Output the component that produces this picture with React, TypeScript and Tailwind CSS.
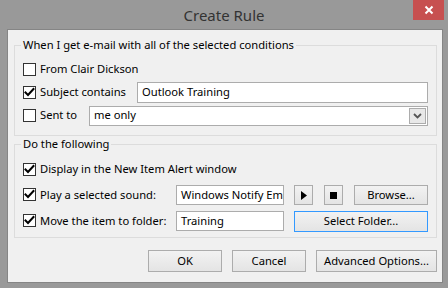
import React from "react";

function Check({ checked }: { checked: boolean }) {
  return (
    <div className="w-[13px] h-[13px] border border-[#333333] bg-white flex items-center justify-center shrink-0">
      {checked && (
        <svg width="11" height="11" viewBox="0 0 11 11">
          <path d="M1.5 5.5 L4 8 L9.5 2" fill="none" stroke="#000" strokeWidth="2" strokeLinecap="square" />
        </svg>
      )}
    </div>
  );
}

function Btn({ className, children }: { className: string; children?: React.ReactNode }) {
  return (
    <div
      className={
        "border bg-gradient-to-b from-[#f2f2f2] to-[#e4e4e4] flex items-center justify-center text-[11.2px] text-black " +
        className
      }
    >
      {children}
    </div>
  );
}

function Field({ className, children }: { className: string; children?: React.ReactNode }) {
  return (
    <div className={"border border-[#acacac] bg-white flex items-center pl-[4px] text-[11.2px] text-black overflow-hidden whitespace-nowrap " + className}>
      {children}
    </div>
  );
}

export default function App() {
  return (
    <div className="w-[448px] h-[288px] bg-[#999999] flex flex-col font-['Noto_Sans',sans-serif] overflow-hidden">
      <div className="h-[29px] relative flex items-center justify-center text-[15px] text-[#333333] pt-[1px]">
        Create Rule
        <div className="absolute right-[4px] top-0 w-[31px] h-[20px] bg-[#c75050] flex items-center justify-center">
          <svg width="10" height="10" viewBox="0 0 10 10">
            <path d="M1.5 1.5 L8.5 8.5 M8.5 1.5 L1.5 8.5" stroke="#fff" strokeWidth="2" />
          </svg>
        </div>
      </div>
      <div className="ml-[7px] mr-[5px] mb-[5px] flex-1 border border-[#858585] bg-[#f0f0f0] flex flex-col text-[11.2px] text-black">
        <fieldset className="ml-[6px] mr-[5px] mt-[7px] border border-[#dcdcdc] pl-[8px] pb-[8px] flex flex-col">
          <legend className="-ml-[2px] px-[2px] leading-[16px] text-black">When I get e-mail with all of the selected conditions</legend>
          <div className="h-[23px] mt-[5px] flex items-center gap-[4px]">
            <Check checked={false} />
            <span>From Clair Dickson</span>
          </div>
          <div className="h-[23px] flex items-center">
            <div className="w-[114px] flex items-center gap-[4px]">
              <Check checked={true} />
              <span>Subject contains</span>
            </div>
            <Field className="w-[291px] h-[21px]">Outlook Training</Field>
          </div>
          <div className="h-[23px] flex items-center">
            <div className="w-[66px] flex items-center gap-[4px]">
              <Check checked={false} />
              <span>Sent to</span>
            </div>
            <div className="w-[339px] h-[20px] border border-[#acacac] bg-white flex items-center justify-between pl-[4px] pr-[1px]">
              <span>me only</span>
              <div className="w-[17px] h-[16px] border border-[#acacac] bg-[#e8e8e8] flex items-center justify-center">
                <svg width="9" height="6" viewBox="0 0 9 6">
                  <path d="M1 1 L4.5 4.5 L8 1" fill="none" stroke="#555" strokeWidth="1.8" />
                </svg>
              </div>
            </div>
          </div>
        </fieldset>
        <fieldset className="ml-[6px] mr-[5px] mt-[0px] border border-[#dcdcdc] pl-[8px] pb-[3px] flex flex-col">
          <legend className="-ml-[2px] px-[2px] leading-[16px] text-black">Do the following</legend>
          <div className="h-[26px] mt-[4px] flex items-center gap-[4px]">
            <Check checked={true} />
            <span>Display in the New Item Alert window</span>
          </div>
          <div className="h-[26px] flex items-center">
            <div className="w-[153px] flex items-center gap-[4px]">
              <Check checked={true} />
              <span>Play a selected sound:</span>
            </div>
            <Field className="w-[108px] h-[20px]">Windows Notify Email</Field>
            <Btn className="ml-[10px] w-[19px] h-[20px] border-[#acacac]">
              <svg width="6" height="9" viewBox="0 0 6 9">
                <path d="M0 0 L6 4.5 L0 9 Z" fill="#000" />
              </svg>
            </Btn>
            <Btn className="ml-[11px] w-[19px] h-[20px] border-[#acacac]">
              <div className="w-[7px] h-[7px] bg-black" />
            </Btn>
            <Btn className="ml-[11px] w-[74px] h-[20px] border-[#acacac]">Browse...</Btn>
          </div>
          <div className="h-[26px] flex items-center">
            <div className="w-[153px] flex items-center gap-[4px]">
              <Check checked={true} />
              <span>Move the item to folder:</span>
            </div>
            <Field className="w-[108px] h-[20px]">Training</Field>
            <Btn className="ml-[10px] w-[134px] h-[21px] border-[#3399ff]">Select Folder...</Btn>
          </div>
        </fieldset>
        <div className="mt-[12px] mr-[5px] flex justify-end gap-[10px]">
          <Btn className="w-[74px] h-[22px] border-[#acacac]">OK</Btn>
          <Btn className="w-[74px] h-[22px] border-[#acacac]">Cancel</Btn>
          <Btn className="w-[121px] h-[22px] border-[#acacac]">Advanced Options...</Btn>
        </div>
      </div>
    </div>
  );
}
